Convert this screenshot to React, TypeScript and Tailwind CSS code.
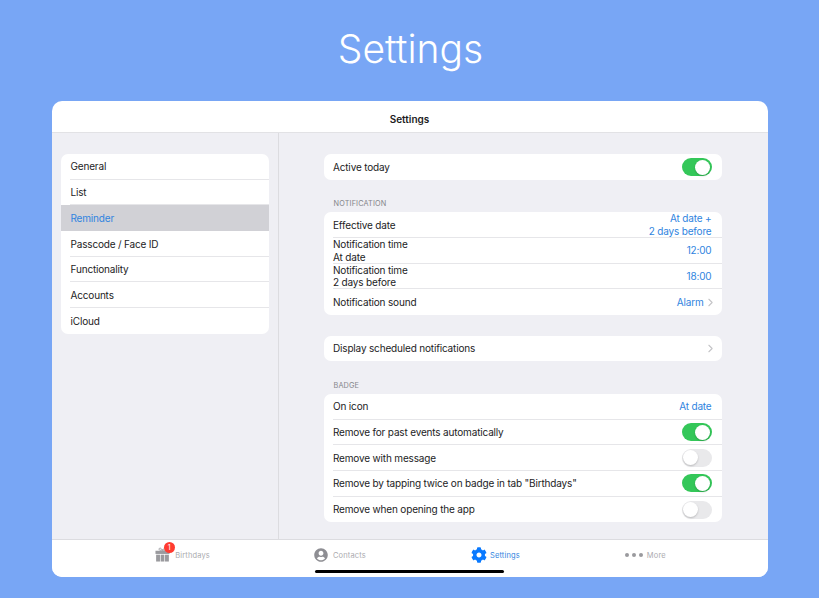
import type { ReactNode } from 'react';
import { ChevronRight } from 'lucide-react';
import { FaCog, FaUserCircle } from 'react-icons/fa';

function Toggle({ on }: { on: boolean }) {
  return (
    <div className={`flex h-[18px] w-[30px] rounded-full p-[1.5px] ${on ? 'justify-end bg-[#34c759]' : 'justify-start bg-[#e9e9eb]'}`}>
      <div className="h-[15px] w-[15px] rounded-full bg-white shadow-[0_1px_2px_rgba(0,0,0,0.2)]" />
    </div>
  );
}

function Chevron() {
  return <ChevronRight className="-mr-[5px] h-[13px] w-[13px] text-[#c4c4c7]" strokeWidth={2} />;
}

function Row({ children, right, last }: { children: ReactNode; right?: ReactNode; last?: boolean }) {
  return (
    <div className="pl-[9px]">
      <div className={`flex h-[25.7px] items-center justify-between pr-[10px] pt-[0.5px] ${last ? '' : 'border-b border-[#e6e6e9]'}`}>
        <div className="pl-[0.5px] pt-[0.3px] leading-[12.8px]">{children}</div>
        {right}
      </div>
    </div>
  );
}

function Value({ children }: { children: ReactNode }) {
  return <div className="text-right leading-[12.8px] text-[#2f84e0]">{children}</div>;
}

function Caption({ children }: { children: string }) {
  return <div className="mb-[3px] mt-[19.5px] pl-[10px] text-[7.3px] leading-[10px] tracking-[0.15px] text-[#85858a]">{children}</div>;
}

function Group({ children }: { children: ReactNode }) {
  return <div className="overflow-hidden rounded-[7px] bg-white">{children}</div>;
}

const menu = ['General', 'List', 'Reminder', 'Passcode / Face ID', 'Functionality', 'Accounts', 'iCloud'];

function GiftIcon() {
  return (
    <svg width="15" height="15" viewBox="0 0 16 16" fill="#9a9a9e">
      <path d="M5 3.4C3.8 2.6 4.4.9 5.6 1.2 6.6 1.4 7.5 2.6 8 3.6c.5-1 1.4-2.2 2.4-2.4 1.2-.3 1.8 1.4.6 2.2z" fill="none" stroke="#9a9a9e" strokeWidth="1" />
      <rect x="0.5" y="4" width="15" height="3.4" />
      <rect x="1.2" y="8.2" width="4.1" height="7.3" />
      <rect x="6" y="8.2" width="4" height="7.3" />
      <rect x="10.7" y="8.2" width="4.1" height="7.3" />
    </svg>
  );
}

export default function App() {
  return (
    <div className="flex h-[598px] w-[819px] flex-col items-center overflow-hidden bg-[#78a6f5] font-['Inter',sans-serif] text-[10px] tracking-[-0.17px] text-[#1c1c1e]">
      <div className="flex h-[101px] items-center pb-[5px] pl-[2px] text-[39px] font-light leading-none tracking-normal text-white">Settings</div>

      <div className="relative flex h-[476px] w-[716px] flex-col overflow-hidden rounded-[10px] bg-white">
        <div className="flex h-[32px] shrink-0 items-center justify-center border-b border-[#e2e2e5] pt-[6px] font-semibold tracking-normal">Settings</div>

        <div className="flex min-h-0 flex-1 bg-[#efeff4]">
          <div className="w-[227px] shrink-0 border-r border-[#dcdce0] pl-[9px] pr-[9px] pt-[21px]">
            <div className="overflow-hidden rounded-[7px] bg-white">
              {menu.map((item, i) => {
                const active = item === 'Reminder';
                return (
                  <div key={item} className={active ? 'bg-[#d1d1d6] pl-[9px]' : 'pl-[9px]'}>
                    <div className={`flex h-[25.7px] items-center pl-[1px] pt-[1px] leading-[12.8px] ${i < menu.length - 1 && !active ? 'border-b border-[#e6e6e9]' : ''} ${active ? 'text-[#2f84e0]' : ''}`}>
                      {item}
                    </div>
                  </div>
                );
              })}
            </div>
          </div>

          <div className="flex-1 pl-[45px] pr-[46px] pt-[21px]">
            <Group>
              <Row last right={<Toggle on />}>Active today</Row>
            </Group>

            <Caption>NOTIFICATION</Caption>
            <Group>
              <Row right={<Value>At date +<br />2 days before</Value>}>Effective date</Row>
              <Row right={<Value>12:00</Value>}>Notification time<br />At date</Row>
              <Row right={<Value>18:00</Value>}>Notification time<br />2 days before</Row>
              <Row last right={<div className="flex items-center"><Value>Alarm</Value><Chevron /></div>}>Notification sound</Row>
            </Group>

            <div className="mt-[20.7px]">
              <Group>
                <Row last right={<Chevron />}>Display scheduled notifications</Row>
              </Group>
            </div>

            <Caption>BADGE</Caption>
            <Group>
              <Row right={<Value>At date</Value>}>On icon</Row>
              <Row right={<Toggle on />}>Remove for past events automatically</Row>
              <Row right={<Toggle on={false} />}>Remove with message</Row>
              <Row right={<Toggle on />}>Remove by tapping twice on badge in tab "Birthdays"</Row>
              <Row last right={<Toggle on={false} />}>Remove when opening the app</Row>
            </Group>
          </div>
        </div>

        <div className="flex h-[38px] shrink-0 items-start justify-center gap-[105px] border-t border-[#dcdce0] bg-white pl-[2px] pt-[7px] text-[7.5px] leading-none tracking-[0.15px] text-[#ababaf]">
          <div className="relative -mr-[1px] flex h-[15px] items-center gap-[5px]">
            <GiftIcon />
            <span className="absolute left-[8.5px] top-[-5.5px] flex h-[11px] w-[11px] items-center justify-center rounded-full bg-[#ff3b30] text-[7px] tracking-normal text-white">1</span>
            <span className="pt-[2px]">Birthdays</span>
          </div>
          <div className="flex h-[15px] items-center gap-[5px]">
            <FaUserCircle className="h-[14px] w-[14px] text-[#8e8e93]" />
            <span className="pt-[2px]">Contacts</span>
          </div>
          <div className="flex h-[15px] items-center gap-[3px] text-[#2f84e0]">
            <FaCog className="h-[16px] w-[16px] text-[#0a7aff]" />
            <span className="pt-[2px]">Settings</span>
          </div>
          <div className="flex h-[15px] items-center gap-[4px]">
            <div className="flex gap-[3px]">
              <div className="h-[4px] w-[4px] rounded-full bg-[#9a9a9e]" />
              <div className="h-[4px] w-[4px] rounded-full bg-[#9a9a9e]" />
              <div className="h-[4px] w-[4px] rounded-full bg-[#9a9a9e]" />
            </div>
            <span className="pt-[2px]">More</span>
          </div>
        </div>

        <div className="absolute bottom-[4px] left-[263px] h-[3px] w-[189px] rounded-full bg-black" />
      </div>
    </div>
  );
}
